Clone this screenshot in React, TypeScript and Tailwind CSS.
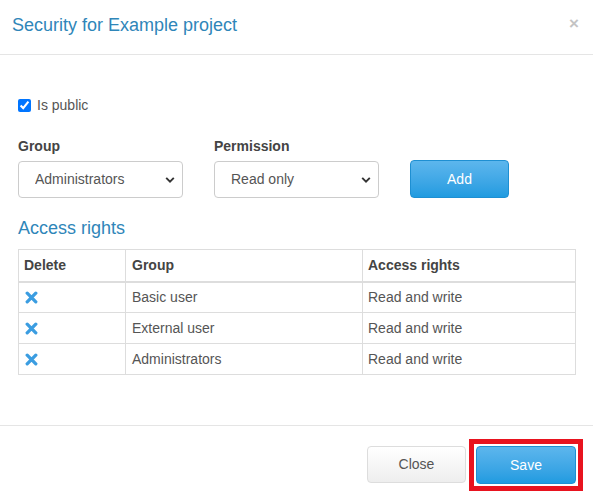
import { useState } from "react";

const font = { fontFamily: '"Liberation Sans", Arial, sans-serif' };

type Right = { group: string; access: string };

const initialRights: Right[] = [
    { group: "Basic user", access: "Read and write" },
    { group: "External user", access: "Read and write" },
    { group: "Administrators", access: "Read and write" },
];

function Chevron() {
    return (
        <svg
            className="pointer-events-none absolute right-[8px] top-1/2 -translate-y-1/2"
            width="10"
            height="7"
            viewBox="0 0 10 7"
        >
            <path d="M1.2 1.4 5 5.2 8.8 1.4" fill="none" stroke="#333" strokeWidth="1.9" />
        </svg>
    );
}

function Select({ options, value }: { options: string[]; value: string }) {
    return (
        <div className="relative h-[37px] w-[165px]">
            <select
                defaultValue={value}
                className="h-full w-full appearance-none rounded-[4px] border border-[#cccccc] bg-white pl-[16px] text-[14px] text-[#555555] outline-none"
            >
                {options.map((o) => (
                    <option key={o}>{o}</option>
                ))}
            </select>
            <Chevron />
        </div>
    );
}

function DeleteIcon() {
    return (
        <svg width="13" height="13" viewBox="0 0 13 13">
            <path d="M2.2 2.2 10.8 10.8M10.8 2.2 2.2 10.8" stroke="#3b9de1" strokeWidth="3.3" strokeLinecap="round" />
        </svg>
    );
}

export default function App() {
    const [isPublic, setIsPublic] = useState(true);
    const [rights, setRights] = useState(initialRights);

    return (
        <div style={font} className="flex h-[501px] w-[593px] flex-col bg-white text-[14px] text-[#555555]">
            <div className="flex h-[55px] items-center justify-between border-b border-[#e5e5e5] pb-[3px] pl-[12px] pr-[14px]">
                <h4 className="text-[18px] text-[#2f86b9]">Security for Example project</h4>
                <button className="-mt-[4px] text-[17px] font-bold leading-none text-[#c4c4c4]">×</button>
            </div>

            <div className="flex flex-1 flex-col pl-[18px] pr-[17px] pt-[40px]">
                <label className="flex h-[20px] items-center gap-[6px]">
                    <input
                        type="checkbox"
                        checked={isPublic}
                        onChange={(e) => setIsPublic(e.target.checked)}
                        className="m-0 h-[13px] w-[13px] accent-[#0075ff]"
                    />
                    <span>Is public</span>
                </label>

                <div className="mt-[21px] flex items-end gap-[31px]">
                    <div className="flex flex-col gap-[5px]">
                        <span className="h-[20px] font-bold leading-[20px] text-[#444444]">Group</span>
                        <Select options={["Administrators", "Basic user", "External user"]} value="Administrators" />
                    </div>
                    <div className="flex flex-col gap-[5px]">
                        <span className="h-[20px] font-bold leading-[20px] text-[#444444]">Permission</span>
                        <Select options={["Read only", "Read and write"]} value="Read only" />
                    </div>
                    <button className="h-[38px] w-[99px] rounded-[4px] border border-[#1e8fd2] bg-gradient-to-b from-[#5cb6ed] to-[#1f9be0] text-white">
                        Add
                    </button>
                </div>

                <h4 className="mt-[17px] h-[26px] text-[18px] leading-[26px] text-[#2f86b9]">Access rights</h4>

                <table className="mt-[8px] w-[558px] table-fixed border-collapse border border-[#dddddd]">
                    <colgroup>
                        <col className="w-[107px]" />
                        <col className="w-[237px]" />
                        <col />
                    </colgroup>
                    <thead>
                        <tr className="h-[32px] border-b-2 border-[#dddddd] text-left">
                            <th className="border border-[#dddddd] pl-[5px] font-bold text-[#444444]">Delete</th>
                            <th className="border border-[#dddddd] pl-[6px] font-bold text-[#444444]">Group</th>
                            <th className="border border-[#dddddd] pl-[5px] font-bold text-[#444444]">Access rights</th>
                        </tr>
                    </thead>
                    <tbody>
                        {rights.map((r, i) => (
                            <tr key={r.group} className="h-[31px]">
                                <td className="border border-[#dddddd] pl-[6px]">
                                    <button
                                        className="flex items-center"
                                        onClick={() => setRights(rights.filter((_, j) => j !== i))}
                                    >
                                        <DeleteIcon />
                                    </button>
                                </td>
                                <td className="border border-[#dddddd] pl-[6px]">{r.group}</td>
                                <td className="border border-[#dddddd] pl-[5px]">{r.access}</td>
                            </tr>
                        ))}
                    </tbody>
                </table>
            </div>

            <div className="flex h-[76px] items-start justify-end gap-[3px] border-t border-[#e5e5e5] pr-[10px] pt-[13px]">
                <button className="mt-[7px] h-[37px] w-[99px] rounded-[4px] border border-[#dddddd] bg-gradient-to-b from-white to-[#eeeeee] text-[#555555]">
                    Close
                </button>
                <div className="border-[5px] border-[#e8131f] p-[2px]">
                    <button className="block h-[38px] w-[100px] rounded-[4px] border border-[#1e8fd2] bg-gradient-to-b from-[#5cb6ed] to-[#1f9be0] text-white">
                        Save
                    </button>
                </div>
            </div>
        </div>
    );
}
